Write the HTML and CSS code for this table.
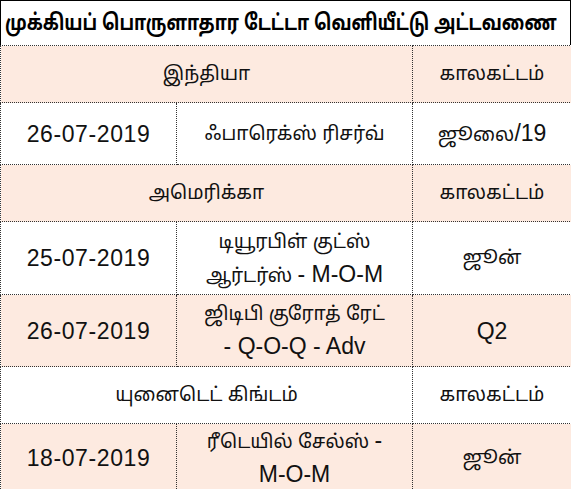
FILE: index.html
```html
<!DOCTYPE html>
<html lang="ta">
<head>
<meta charset="utf-8">
<link rel="stylesheet" href="styles.css">
</head>
<body>
<div class="sheet">
  <div class="title"><span class="title-text">முக்கியப் பொருளாதார டேட்டா வெளியீட்டு அட்டவணை</span></div>
  <table class="grid">
    <colgroup><col class="c1"><col class="c2"><col class="c3"></colgroup>
    <tr class="head peach"><td colspan="2">இந்தியா</td><td>காலகட்டம்</td></tr>
    <tr class="r62"><td class="num">26-07-2019</td><td>ஃபாரெக்ஸ் ரிசர்வ்</td><td>ஜூலை<span class="lat">/19</span></td></tr>
    <tr class="head peach"><td colspan="2">அமெரிக்கா</td><td>காலகட்டம்</td></tr>
    <tr class="r73"><td class="num">25-07-2019</td><td class="two">டியூரபிள் குட்ஸ்<br>ஆர்டர்ஸ் <span class="lat">- M-O-M</span></td><td>ஜூன்</td></tr>
    <tr class="r72 peach"><td class="num">26-07-2019</td><td class="two">ஜிடிபி குரோத் ரேட்<br><span class="lat">- Q-O-Q - Adv</span></td><td class="lat">Q2</td></tr>
    <tr class="head"><td colspan="2">யுனைடெட் கிங்டம்</td><td>காலகட்டம்</td></tr>
    <tr class="r63 peach"><td class="num">18-07-2019</td><td class="two">ரீடெயில் சேல்ஸ் <span class="lat">-</span><br><span class="lat">M-O-M</span></td><td>ஜூன்</td></tr>
  </table>
</div>
</body>
</html>
```
FILE: styles.css
```css
html, body {
  margin: 0;
  padding: 0;
  background: #ffffff;
}
.sheet {
  width: 571px;
  font-family: "Liberation Sans", "Noto Sans Tamil", "Noto Sans", sans-serif;
  color: #111;
}
.title {
  box-sizing: border-box;
  width: 571px;
  height: 45px;
  border: 1px solid #000;
  border-bottom: none;
  padding: 4px 0 0 4px;
  font-size: 22px;
  font-weight: bold;
  line-height: 36px;
  white-space: nowrap;
  color: #000;
  overflow: hidden;
}
.title-text {
  display: inline-block;
  transform: scaleX(0.8);
  transform-origin: left center;
}
.grid {
  width: 571px;
  border-collapse: collapse;
  table-layout: fixed;
}
.c1 { width: 176px; }
.c2 { width: 236px; }
.c3 { width: 159px; }
.grid td {
  border: 1px dotted #333;
  text-align: center;
  vertical-align: middle;
  padding: 0;
  font-size: 19px;
  line-height: 26px;
}
.grid td.num {
  font-size: 23px;
  letter-spacing: 0.6px;
}
.lat {
  font-size: 23px;
}
.grid td.lat {
  font-size: 23px;
}
.grid td.two {
  line-height: 33px;
}
.peach { background: #fdeae0; }
.head { height: 57px; }
.r62 { height: 62px; }
.r73 { height: 73px; }
.r72 { height: 72px; }
.r63 { height: 63px; }
```
